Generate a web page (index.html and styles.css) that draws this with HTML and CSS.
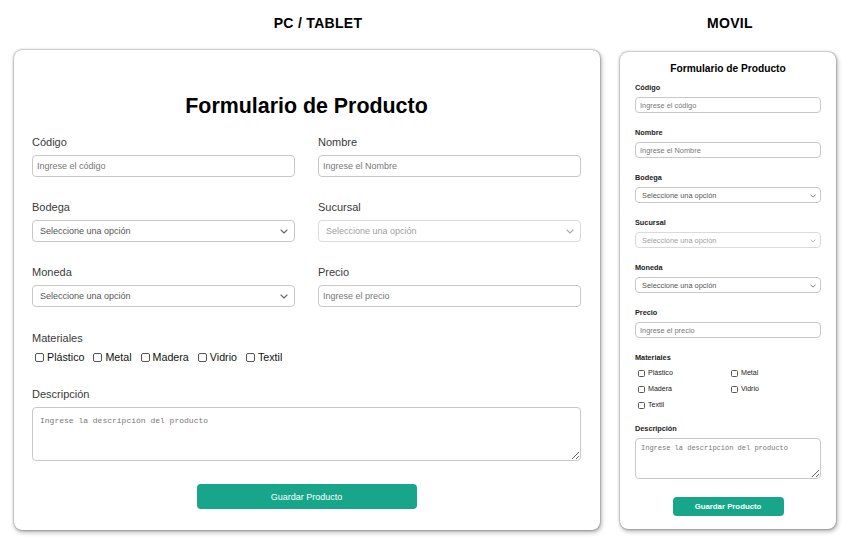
FILE: index.html
```html
<!DOCTYPE html>
<html lang="es">
<head>
<meta charset="utf-8">
<title>Formulario de Producto</title>
<link rel="stylesheet" href="styles.css">
</head>
<body>
<div class="page">
  <section class="col col-pc">
    <h3 class="view-title view-title-pc">PC / TABLET</h3>
    <form class="card card-pc">
      <h2 class="form-title">Formulario de Producto</h2>
      <div class="grid">
        <div class="field">
          <label class="lbl">Código</label>
          <input class="ctrl" type="text" placeholder="Ingrese el código">
        </div>
        <div class="field">
          <label class="lbl">Nombre</label>
          <input class="ctrl" type="text" placeholder="Ingrese el Nombre">
        </div>
        <div class="field">
          <label class="lbl">Bodega</label>
          <div class="sel-wrap">
            <select class="ctrl sel"><option>Seleccione una opción</option></select>
            <svg class="chev" viewBox="0 0 8 5"><path d="M1 1 L4 4 L7 1" fill="none" stroke="#666" stroke-width="1.1" stroke-linecap="round" stroke-linejoin="round"/></svg>
          </div>
        </div>
        <div class="field">
          <label class="lbl">Sucursal</label>
          <div class="sel-wrap">
            <select class="ctrl sel sel-dim"><option>Seleccione una opción</option></select>
            <svg class="chev chev-dim" viewBox="0 0 8 5"><path d="M1 1 L4 4 L7 1" fill="none" stroke="#aaa" stroke-width="1.1" stroke-linecap="round" stroke-linejoin="round"/></svg>
          </div>
        </div>
        <div class="field">
          <label class="lbl">Moneda</label>
          <div class="sel-wrap">
            <select class="ctrl sel"><option>Seleccione una opción</option></select>
            <svg class="chev" viewBox="0 0 8 5"><path d="M1 1 L4 4 L7 1" fill="none" stroke="#666" stroke-width="1.1" stroke-linecap="round" stroke-linejoin="round"/></svg>
          </div>
        </div>
        <div class="field">
          <label class="lbl">Precio</label>
          <input class="ctrl" type="text" placeholder="Ingrese el precio">
        </div>
        <div class="field full field-checks">
          <label class="lbl">Materiales</label>
          <div class="checks">
            <label class="chk"><input type="checkbox"><span>Plástico</span></label>
            <label class="chk"><input type="checkbox"><span>Metal</span></label>
            <label class="chk"><input type="checkbox"><span>Madera</span></label>
            <label class="chk"><input type="checkbox"><span>Vidrio</span></label>
            <label class="chk"><input type="checkbox"><span>Textil</span></label>
          </div>
        </div>
        <div class="field full">
          <label class="lbl">Descripción</label>
          <textarea class="ctrl area" placeholder="Ingrese la descripción del producto"></textarea>
        </div>
        <div class="full actions">
          <button type="button" class="btn">Guardar Producto</button>
        </div>
      </div>
    </form>
  </section>

  <section class="col col-mob">
    <h3 class="view-title view-title-mob">MOVIL</h3>
    <form class="card card-mob">
      <h2 class="form-title">Formulario de Producto</h2>
      <div class="stack">
        <div class="field">
          <label class="lbl">Código</label>
          <input class="ctrl" type="text" placeholder="Ingrese el código">
        </div>
        <div class="field">
          <label class="lbl">Nombre</label>
          <input class="ctrl" type="text" placeholder="Ingrese el Nombre">
        </div>
        <div class="field">
          <label class="lbl">Bodega</label>
          <div class="sel-wrap">
            <select class="ctrl sel"><option>Seleccione una opción</option></select>
            <svg class="chev" viewBox="0 0 8 5"><path d="M1 1 L4 4 L7 1" fill="none" stroke="#666" stroke-width="1.1" stroke-linecap="round" stroke-linejoin="round"/></svg>
          </div>
        </div>
        <div class="field">
          <label class="lbl">Sucursal</label>
          <div class="sel-wrap">
            <select class="ctrl sel sel-dim"><option>Seleccione una opción</option></select>
            <svg class="chev chev-dim" viewBox="0 0 8 5"><path d="M1 1 L4 4 L7 1" fill="none" stroke="#aaa" stroke-width="1.1" stroke-linecap="round" stroke-linejoin="round"/></svg>
          </div>
        </div>
        <div class="field">
          <label class="lbl">Moneda</label>
          <div class="sel-wrap">
            <select class="ctrl sel"><option>Seleccione una opción</option></select>
            <svg class="chev" viewBox="0 0 8 5"><path d="M1 1 L4 4 L7 1" fill="none" stroke="#666" stroke-width="1.1" stroke-linecap="round" stroke-linejoin="round"/></svg>
          </div>
        </div>
        <div class="field">
          <label class="lbl">Precio</label>
          <input class="ctrl" type="text" placeholder="Ingrese el precio">
        </div>
        <div class="field field-checks">
          <label class="lbl">Materiales</label>
          <div class="checks">
            <label class="chk"><input type="checkbox"><span>Plástico</span></label>
            <label class="chk"><input type="checkbox"><span>Metal</span></label>
            <label class="chk"><input type="checkbox"><span>Madera</span></label>
            <label class="chk"><input type="checkbox"><span>Vidrio</span></label>
            <label class="chk"><input type="checkbox"><span>Textil</span></label>
          </div>
        </div>
        <div class="field">
          <label class="lbl">Descripción</label>
          <textarea class="ctrl area" placeholder="Ingrese la descripción del producto"></textarea>
        </div>
        <div class="actions">
          <button type="button" class="btn">Guardar Producto</button>
        </div>
      </div>
    </form>
  </section>
</div>
</body>
</html>
```

FILE: styles.css
```css
* { box-sizing: border-box; }

html, body {
  margin: 0;
  padding: 0;
  background: #ffffff;
}

body {
  width: 852px;
  height: 542px;
  overflow: hidden;
  font-family: "Liberation Sans", Arial, sans-serif;
  color: #333;
}

.page {
  display: flex;
  align-items: flex-start;
  gap: 20px;
  padding-left: 14px;
}

.col { display: flex; flex-direction: column; }
.col-pc { width: 586px; }
.col-mob { width: 216px; }

.view-title {
  margin: 15px 0 19px;
  height: 16px;
  line-height: 16px;
  font-size: 14px;
  font-weight: bold;
  letter-spacing: 0.3px;
  text-align: center;
  color: #000;
}
.view-title-pc { padding-left: 22px; }
.view-title-mob { padding-left: 4px; margin-bottom: 21px; }

.card {
  margin: 0;
  background: #fff;
  border-radius: 8px;
  box-shadow: 0 0 2px rgba(0,0,0,0.55), 1px 2px 5px rgba(0,0,0,0.35);
}

.form-title {
  margin: 0;
  text-align: center;
  font-weight: bold;
  color: #000;
}

.lbl { display: block; }

.ctrl {
  display: block;
  width: 100%;
  margin: 0;
  border: 1px solid #c8c8c8;
  border-radius: 4px;
  background: #fff;
  font-family: "Liberation Sans", Arial, sans-serif;
  color: #555;
  outline: none;
}
.ctrl::placeholder { color: #777; }

.sel {
  appearance: none;
  -webkit-appearance: none;
}
.sel-dim { color: #a0a0a0; border-color: #dadada; }

.sel-wrap { position: relative; }
.chev {
  position: absolute;
  top: 50%;
  pointer-events: none;
}

.area {
  resize: vertical;
  font-family: "Liberation Mono", "DejaVu Sans Mono", monospace;
}

.chk {
  display: flex;
  align-items: center;
  color: #111;
}
.chk input {
  appearance: none;
  -webkit-appearance: none;
  margin: 0;
  border: 1px solid #555;
  border-radius: 2px;
  background: #fff;
  flex: none;
}

.actions { display: flex; justify-content: center; }

.btn {
  border: none;
  background: #17a689;
  color: #fff;
  border-radius: 4px;
  font-family: "Liberation Sans", Arial, sans-serif;
  padding: 0;
}

/* ---------- PC / TABLET ---------- */
.card-pc {
  height: 480px;
  padding: 43px 19px 21px 18px;
}
.card-pc .form-title {
  font-size: 21.4px;
  line-height: 26px;
  margin-bottom: 16px;
}
.card-pc .grid {
  display: grid;
  grid-template-columns: 1fr 1fr;
  column-gap: 23px;
  row-gap: 23px;
}
.card-pc .full { grid-column: 1 / -1; }
.card-pc .field-checks { margin-top: 1px; }
.card-pc .lbl {
  font-size: 11px;
  line-height: 14px;
  margin-bottom: 6px;
  color: #3a3a3a;
}
.card-pc .ctrl {
  height: 22px;
  font-size: 9px;
  padding: 0 4px;
}
.card-pc .sel { padding-left: 7px; }
.card-pc .chev {
  width: 8px;
  height: 5px;
  right: 7px;
  margin-top: -2px;
}
.card-pc .area {
  height: 54px;
  font-size: 8px;
  padding: 8px 7px;
}
.card-pc .checks {
  display: flex;
  gap: 6px;
  height: 13px;
}
.card-pc .chk {
  padding-left: 3px;
  gap: 3px;
  font-size: 10.7px;
  line-height: 13px;
}
.card-pc .chk input { width: 9px; height: 9px; }
.card-pc .btn {
  width: 220px;
  height: 25px;
  font-size: 9px;
}

/* ---------- MOVIL ---------- */
.card-mob {
  height: 477px;
  padding: 10px 15px 13px;
}
.card-mob .form-title {
  font-size: 10.2px;
  line-height: 13px;
  margin-bottom: 8px;
}
.card-mob .stack {
  display: flex;
  flex-direction: column;
  gap: 15px;
}
.card-mob .lbl {
  font-size: 7.3px;
  line-height: 10px;
  font-weight: bold;
  margin-bottom: 4px;
  color: #222;
}
.card-mob .ctrl {
  height: 16px;
  font-size: 7.4px;
  padding: 0 4px;
}
.card-mob .sel { padding-left: 6px; }
.card-mob .chev {
  width: 6px;
  height: 4px;
  right: 5px;
  margin-top: -1.5px;
}
.card-mob .area {
  height: 41px;
  font-size: 7px;
  padding: 5px 5px;
}
.card-mob .field-checks { margin-bottom: -2px; }
.card-mob .checks {
  display: grid;
  grid-template-columns: 1fr 1fr;
  row-gap: 4px;
}
.card-mob .chk {
  padding-left: 3px;
  gap: 3px;
  font-size: 7.1px;
  line-height: 12px;
  height: 12px;
  color: #222;
}
.card-mob .chk input { width: 7px; height: 7px; border-radius: 1.5px; }
.card-mob .actions { margin-top: 3px; }
.card-mob .btn {
  width: 111px;
  height: 19px;
  font-size: 7.8px;
  font-weight: bold;
}
```
